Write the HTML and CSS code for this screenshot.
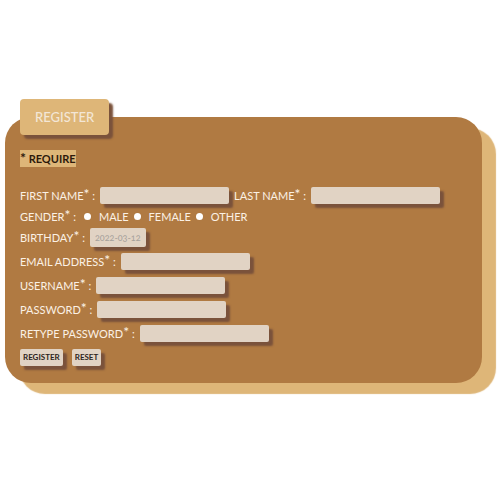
FILE: index.html
```html
<!DOCTYPE html>
<html lang="en">
<head>
<meta charset="utf-8">
<title>Register</title>
<link rel="stylesheet" href="styles.css">
</head>
<body>
<form class="card">
<fieldset>
  <legend class="title">REGISTER</legend>
  <p class="note"><mark><span class="star">*</span> REQUIRE</mark></p>
  <div class="row">
    <label for="first">FIRST NAME<span class="star">*</span> :</label>
    <input class="field" id="first" type="text">
    <label for="last">LAST NAME<span class="star">*</span> :</label>
    <input class="field" id="last" type="text">
  </div>
  <div class="row short" role="radiogroup" aria-labelledby="gender">
    <span class="caption" id="gender">GENDER<span class="star">*</span> :</span>
    <label class="option"><input type="radio" name="gender">MALE</label>
    <label class="option"><input type="radio" name="gender">FEMALE</label>
    <label class="option"><input type="radio" name="gender">OTHER</label>
  </div>
  <div class="row">
    <label for="birthday">BIRTHDAY<span class="star">*</span> :</label>
    <input class="field date" id="birthday" type="text" value="2022-03-12">
  </div>
  <div class="row">
    <label for="email">EMAIL ADDRESS<span class="star">*</span> :</label>
    <input class="field" id="email" type="email">
  </div>
  <div class="row">
    <label for="username">USERNAME<span class="star">*</span> :</label>
    <input class="field" id="username" type="text">
  </div>
  <div class="row">
    <label for="password">PASSWORD<span class="star">*</span> :</label>
    <input class="field" id="password" type="password">
  </div>
  <div class="row">
    <label for="retype">RETYPE PASSWORD<span class="star">*</span> :</label>
    <input class="field" id="retype" type="password">
  </div>
  <div class="actions">
    <button type="submit">REGISTER</button>
    <button type="reset">RESET</button>
  </div>
</fieldset>
</form>
</body>
</html>
```
FILE: styles.css
```css
* {
  box-sizing: border-box;
}

body {
  min-height: 100vh;
  margin: 0;
  padding: 117px 18px 30px 5px;
  background: #fff;
  color: #fbf1e5;
  font-family: Lato, "Open Sans", sans-serif;
  font-size: 11px;
  line-height: 17px;
}

.card {
  display: flow-root;
  padding: 0 15px 17px;
  border-radius: 26px;
  background: #b07a42;
  box-shadow: 14px 11px 1px #deb678;
}

fieldset {
  min-width: 0;
  margin: -18px 0 0;
  padding: 15px 0 0;
  border: 0;
}

.title {
  padding: 10px 15px;
  border-radius: 4px;
  background: #deb678;
  box-shadow: 4px 4px 2px #7a523b;
  color: #f3e6d6;
  font-size: 13px;
  line-height: 16px;
  font-weight: 500;
}

.note {
  margin: 0 0 16px;
  color: #2d1a0c;
  font-weight: 700;
}

mark {
  display: inline-block;
  background: #deb678;
  color: inherit;
}

.row {
  display: flex;
  align-items: center;
  height: 24px;
  gap: 5px;
}

.short {
  height: 18px;
}

.caption {
  padding-right: 3px;
}

.star {
  font-size: 14px;
  line-height: 1px;
}

.row .star {
  vertical-align: 1px;
}

.field {
  width: 129px;
  height: 17px;
  padding: 0 5px;
  border: 0;
  border-radius: 2px;
  background: #e1d3c4;
  box-shadow: 4px 4px 2px #7a523b;
  font: inherit;
}

.date {
  width: 56px;
  height: 19px;
  color: #a5a09b;
  font-size: 9px;
  font-variant-numeric: oldstyle-nums;
}

.option {
  display: flex;
  align-items: center;
  gap: 8px;
}

.option input {
  appearance: none;
  width: 7px;
  height: 7px;
  margin: 0;
  border-radius: 50%;
  background: #fff;
}

.actions {
  display: flex;
  gap: 9px;
  margin-top: 4px;
}

button {
  height: 17px;
  padding: 0 3px;
  border: 0;
  border-radius: 2px;
  background: #e1d3c4;
  box-shadow: 4px 4px 2px #7a523b;
  color: #2d2420;
  font: 700 8px/17px Lato, "Open Sans", sans-serif;
}
```
